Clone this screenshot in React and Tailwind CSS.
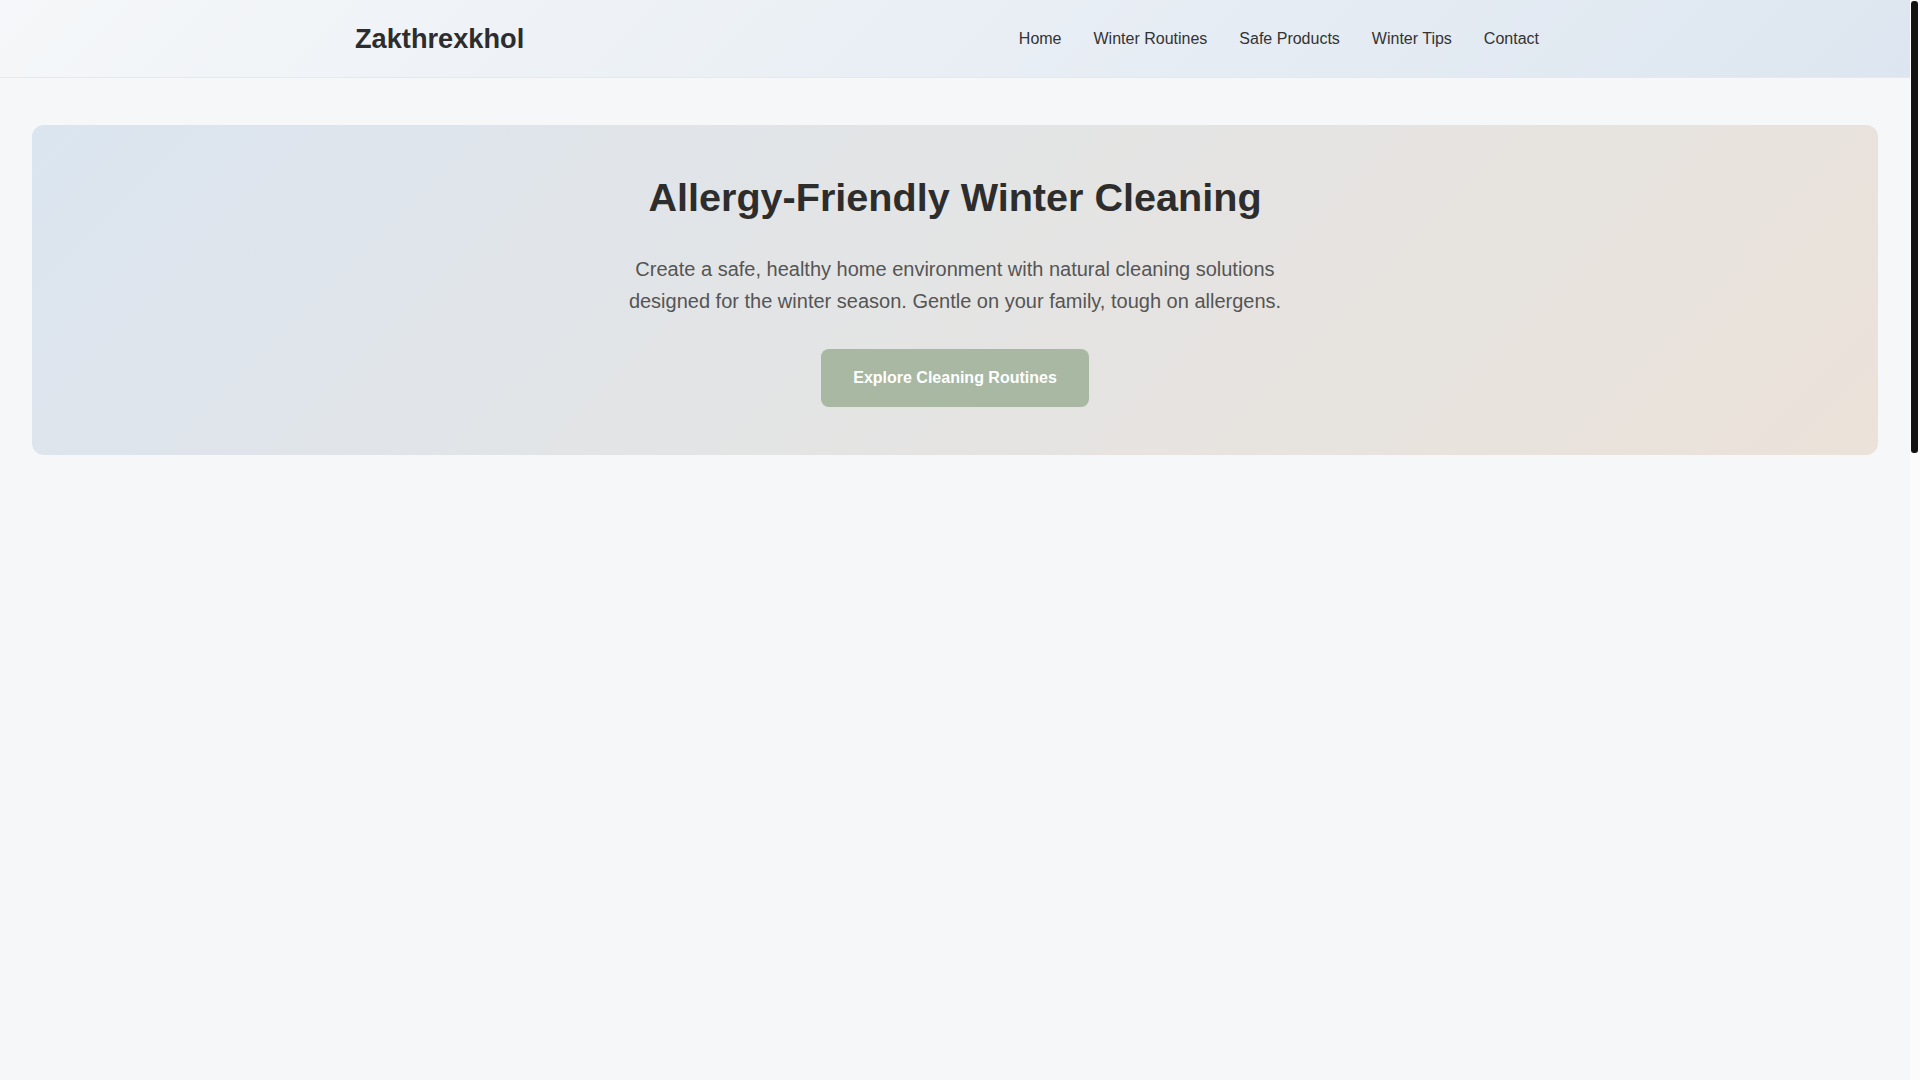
import React from "react";

export default function App() {
  const links = ["Home", "Winter Routines", "Safe Products", "Winter Tips", "Contact"];
  return (
    <div
      className="flex min-h-screen bg-[#f5f7f9] text-[#333] leading-[1.6]"
      style={{ fontFamily: '"Liberation Sans", Arial, Helvetica, sans-serif' }}
    >
      <div className="min-w-0 flex-1">
        <header className="h-[78px] border-b border-[#e6e8ea] bg-[linear-gradient(135deg,#f5f7f9,#dde6f0)]">
          <div className="mx-auto flex h-full max-w-[1200px] items-center justify-between">
            <div className="text-[27.2px] font-bold text-[#2d2d2d]">Zakthrexkhol</div>
            <nav className="flex items-center">
              {links.map((l) => (
                <a key={l} href="#" className="px-4 text-[16px] text-[#333]">
                  {l}
                </a>
              ))}
            </nav>
          </div>
        </header>

        <main className="px-8 pt-[47px]">
          <section className="rounded-xl bg-[linear-gradient(135deg,#dbe5f0,#e4e4e4,#ebe2d9)] px-8 py-12 text-center">
            <h1 className="mb-8 text-[39.6px] font-bold leading-[48px] text-[#2d2d2d]">
              Allergy-Friendly Winter Cleaning
            </h1>
            <p className="mx-auto mb-8 max-w-[700px] text-[20px] leading-[1.6] text-[#555]">
              Create a safe, healthy home environment with natural cleaning solutions designed for the winter season. Gentle on your family, tough on allergens.
            </p>
            <button className="rounded-lg bg-[#a8b8a2] px-8 py-4 text-[16px] font-bold leading-[1.6] text-white">
              Explore Cleaning Routines
            </button>
          </section>
        </main>
      </div>
      <div className="w-[10px] shrink-0 bg-[#fbfbfb] pl-px pr-[2px] pt-px">
        <div className="h-[452px] w-full rounded-[3px] bg-[#111]" />
      </div>
    </div>
  );
}
